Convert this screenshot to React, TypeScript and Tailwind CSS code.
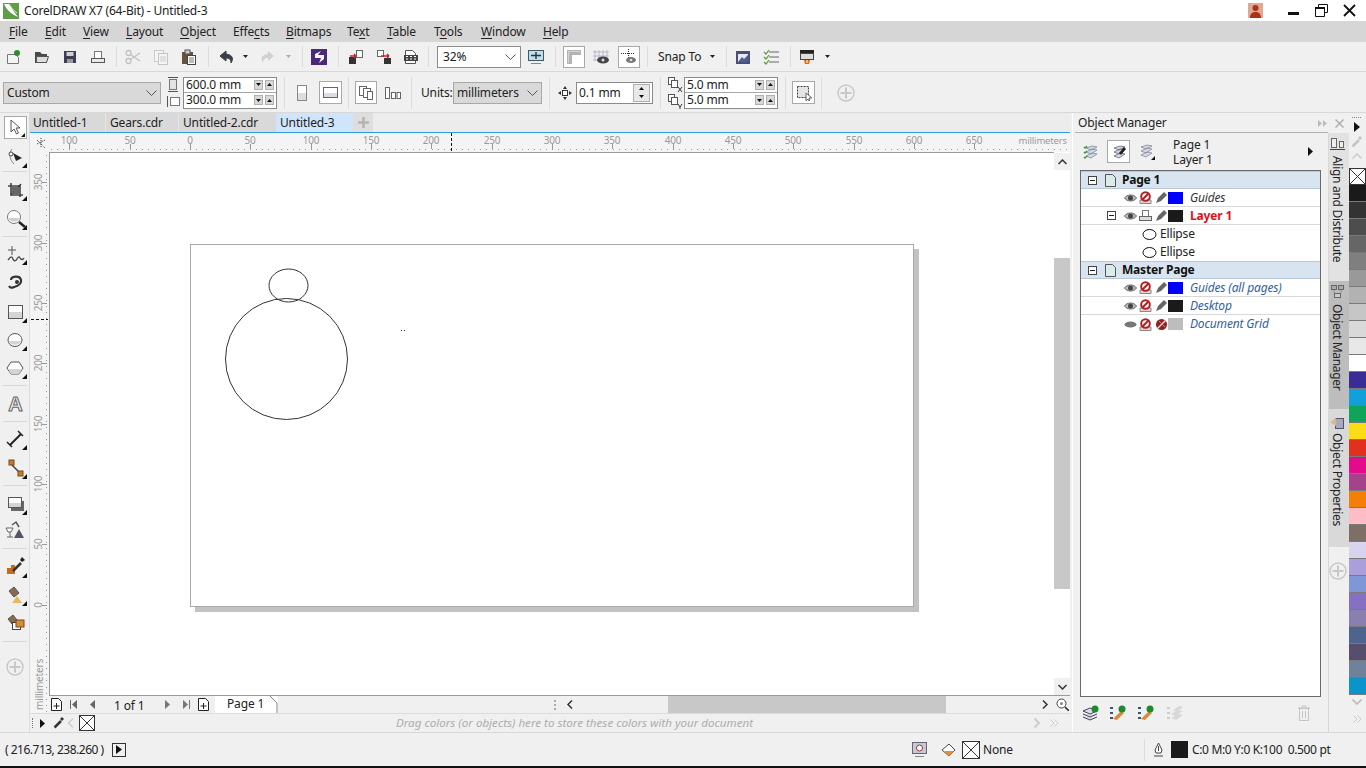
import React from 'react'

const FONT = "font-['Noto_Sans','Open_Sans',sans-serif]"

type IconProps = { className?: string; w?: number; h?: number; children?: React.ReactNode; box?: string }

const Ico = ({ className = '', w = 16, h = 16, box, children }: IconProps) => (
    <svg width={w} height={h} viewBox={box || `0 0 ${w} ${h}`} className={`block shrink-0 ${className}`}>
        {children}
    </svg>
)

const Sep = ({ className = '' }: { className?: string }) => <div className={`w-px bg-[#dcdcdc] shrink-0 ${className}`} />

const Caret = ({ className = '', color = '#222' }: { className?: string; color?: string }) => (
    <Ico w={5} h={3} className={className}>
        <path d="M0 0h5L2.500 3z" fill={color} />
    </Ico>
)

const Chevron = ({ color = '#555' }: { color?: string }) => (
    <Ico w={11} h={6}>
        <path d="M.5.5l5 5 5-5" fill="none" stroke={color} />
    </Ico>
)

/* small black corner mark on toolbox flyouts */
const Fly = () => <path d="M24 23h-5l5-5z" fill="#111" />

const ToolIcon = ({ y, children, fly = true }: { y: string; children: React.ReactNode; fly?: boolean }) => (
    <svg width={26} height={24} viewBox="0 0 26 24" className={`block shrink-0 ml-[3px] ${y}`}>
        {children}
        {fly && <Fly />}
    </svg>
)

const ToolSep = ({ y }: { y: string }) => <div className={`h-px w-[24px] ml-[3px] bg-[#d8d8d8] shrink-0 ${y}`} />

const Toolbox = () => (
    <div className="w-[30px] shrink-0 bg-[#f0f0f0] border-r border-[#dcdcdc] flex flex-col">
        <div className="ml-[4px] mt-[3px] h-[23px] w-[23px] bg-white border border-[#a8a8a8] shrink-0 relative">
            <svg width={21} height={21} viewBox="0 0 21 21" className="block">
                <path d="M6 3v12l3-3 2.500 5 2-1-2.500-5h4z" fill="#fff" stroke="#555" />
                <path d="M20 20h-4l4-4z" fill="#111" />
            </svg>
        </div>
        {/* shape */}
        <ToolIcon y="mt-[6px]">
            <path d="M9 4c-3 4-3 10 2 15" fill="none" stroke="#888" />
            <circle cx="8" cy="9" r="2" fill="#fff" stroke="#444" />
            <path d="M10 8l9 5-6 3z" fill="#222" />
        </ToolIcon>
        <ToolSep y="mt-[2px]" />
        {/* crop */}
        <ToolIcon y="mt-[6px]">
            <path d="M8 5v12h12M5 8h12v11" fill="none" stroke="#444" strokeWidth="1.600" />
            <path d="M8 17L18 6" stroke="#333" strokeWidth="1.300" />
            <rect x="9" y="9" width="7" height="7" fill="#666" />
        </ToolIcon>
        {/* zoom */}
        <ToolIcon y="mt-[5px]">
            <circle cx="11" cy="10" r="6.500" fill="#fff" stroke="#777" />
            <path d="M5.500 11h11a6 6 0 01-11 0z" fill="#ccc" />
            <path d="M16 15l6 5" stroke="#222" strokeWidth="2.500" />
        </ToolIcon>
        <ToolSep y="mt-[5px]" />
        {/* freehand */}
        <ToolIcon y="mt-[5px]">
            <path d="M9 4v9M5 8h8" stroke="#555" />
            <path d="M5 18c3-4 4-4 5-1s3 2 4 0 2-3 3-1 3 2 4 0" fill="none" stroke="#444" strokeWidth="1.300" />
        </ToolIcon>
        {/* smart drawing */}
        <ToolIcon y="mt-[5px]" fly={false}>
            <path d="M8 9c0-4 9-5 10 0s-4 6-7 7c-2 1-4 1-5-1" fill="none" stroke="#333" strokeWidth="2.200" />
            <circle cx="14" cy="11" r="2" fill="#333" />
        </ToolIcon>
        {/* rectangle */}
        <ToolIcon y="mt-[5px]">
            <rect x="5.500" y="5.500" width="14" height="13" fill="#fff" stroke="#555" />
            <rect x="6" y="12" width="13" height="6" fill="#d4d4d4" />
        </ToolIcon>
        {/* ellipse */}
        <ToolIcon y="mt-[4px]">
            <ellipse cx="12" cy="12" rx="7" ry="6.500" fill="#fff" stroke="#555" />
            <path d="M5.500 13h13a7 6 0 01-13 0z" fill="#d4d4d4" />
        </ToolIcon>
        {/* polygon */}
        <ToolIcon y="mt-[4px]">
            <path d="M8 6h8l4 6-4 6H8l-4-6z" fill="#fff" stroke="#555" />
            <path d="M5 13h14l-3 5H8z" fill="#d4d4d4" />
        </ToolIcon>
        <ToolSep y="mt-[5px]" />
        {/* text tool glyph */}
        <ToolIcon y="mt-[6px]" fly={false}>
            <text x="12.500" y="19" textAnchor="middle" fontFamily="Liberation Sans" fontSize="20" fontWeight="700" fill="#eee" stroke="#666" strokeWidth="1">
                A
            </text>
        </ToolIcon>
        <ToolSep y="mt-[5px]" />
        {/* dimension */}
        <ToolIcon y="mt-[5px]">
            <path d="M7 18L18 7" stroke="#222" strokeWidth="2" />
            <path d="M4 15l5 5M15 4l5 5" stroke="#222" strokeWidth="1.500" />
        </ToolIcon>
        {/* connector */}
        <ToolIcon y="mt-[5px]">
            <path d="M8 8l9 9" stroke="#444" strokeWidth="1.500" />
            <rect x="6" y="4" width="5" height="5" fill="#c8792e" stroke="#7a4a1a" />
            <rect x="15" y="15" width="5" height="5" fill="#c8792e" stroke="#7a4a1a" />
        </ToolIcon>
        <ToolSep y="mt-[5px]" />
        {/* drop shadow */}
        <ToolIcon y="mt-[6px]">
            <rect x="8" y="9" width="13" height="10" fill="#666" />
            <rect x="5.500" y="5.500" width="13" height="10" fill="#fff" stroke="#555" />
            <rect x="6" y="11" width="12" height="4" fill="#d4d4d4" />
        </ToolIcon>
        {/* transparency */}
        <ToolIcon y="mt-[3px]" fly={false}>
            <path d="M3 9h7l-2 4H5zM7 13v5M4 18h6" fill="#fff" stroke="#666" />
            <path d="M9 6l4-3 3 5" fill="none" stroke="#555" strokeWidth="1.500" />
            <path d="M16 10l5 9H11z" fill="#556" />
        </ToolIcon>
        <ToolSep y="mt-[5px]" />
        {/* eyedropper */}
        <ToolIcon y="mt-[6px]">
            <path d="M4 13h4v-3h4v9H4z" fill="#c86a1e" />
            <path d="M10 16l8-8" stroke="#333" strokeWidth="2.500" />
            <path d="M17 5l2-3 3 3-3 2z" fill="#222" />
        </ToolIcon>
        {/* interactive fill */}
        <ToolIcon y="mt-[4px]">
            <path d="M6 8l5-4 5 6-5 4z" fill="#8a6a4a" stroke="#555" />
            <path d="M14 13l5 7H9z" fill="#e8b860" />
        </ToolIcon>
        {/* smart fill */}
        <ToolIcon y="mt-[4px]" fly={false}>
            <path d="M5 8l5-4 4 5-5 4z" fill="#8a6a4a" stroke="#555" />
            <rect x="9.500" y="11.500" width="8" height="7" fill="#fff" stroke="#444" />
            <rect x="13" y="9" width="8" height="7" fill="#d88a3c" stroke="#7a4a1a" />
        </ToolIcon>
        <ToolSep y="mt-[6px]" />
        <div className="ml-[6px] mt-[16px]">
            <PlusRound />
        </div>
    </div>
)

const PlusRound = () => (
    <Ico w={18} h={18}>
        <circle cx="9" cy="9" r="8" fill="none" stroke="#c8c8c8" strokeWidth="1.500" />
        <path d="M9 3.500v11M3.500 9h11" stroke="#c8c8c8" strokeWidth="2" />
    </Ico>
)

const TitleBar = () => (
    <div className="h-[21px] bg-white flex items-center shrink-0">
        <Ico w={16} h={16} className="ml-[3px]">
            <rect width="16" height="16" fill="#5f9e45" />
            <path d="M1 1c3 6 7 10 14 13C11 9 8 4 6 1z" fill="#fff" />
            <path d="M6 1c2 3 4 6 8 9" stroke="#cfe6bd" fill="none" />
        </Ico>
        <span className="ml-[5px] text-[12px] text-[#222] tracking-[-0.2px]">CorelDRAW X7 (64-Bit) - Untitled-3</span>
        <div className="ml-auto flex items-center">
            <Ico w={15} h={15}>
                <rect width="15" height="15" fill="#e2a78f" />
                <circle cx="7.500" cy="5" r="3" fill="#a8321a" />
                <path d="M2 15c0-5 3-6 5.500-6s5.500 1 5.500 6z" fill="#a8321a" />
            </Ico>
            <Ico w={11} h={3} className="ml-[25px] mt-[6px]">
                <rect width="11" height="3" fill="#111" />
            </Ico>
            <Ico w={13} h={13} className="ml-[16px]">
                <path d="M3.500 3V.5h9v8H10M.5 3.500h9v9h-9z" fill="none" stroke="#111" />
                <path d="M0 3h10v2H0z" fill="#111" />
            </Ico>
            <Ico w={13} h={13} className="ml-[15px] mr-[10px]">
                <path d="M1 1l11 11M12 1L1 12" stroke="#111" strokeWidth="1.800" />
            </Ico>
        </div>
    </div>
)

const menus = [
    { pre: '', key: 'F', post: 'ile', w: 'w-[36px]' },
    { pre: '', key: 'E', post: 'dit', w: 'w-[38px]' },
    { pre: '', key: 'V', post: 'iew', w: 'w-[43px]' },
    { pre: '', key: 'L', post: 'ayout', w: 'w-[54px]' },
    { pre: '', key: 'O', post: 'bject', w: 'w-[53px]' },
    { pre: 'Effe', key: 'c', post: 'ts', w: 'w-[53px]' },
    { pre: '', key: 'B', post: 'itmaps', w: 'w-[61px]' },
    { pre: 'Te', key: 'x', post: 't', w: 'w-[40px]' },
    { pre: '', key: 'T', post: 'able', w: 'w-[47px]' },
    { pre: 'T', key: 'o', post: 'ols', w: 'w-[47px]' },
    { pre: '', key: 'W', post: 'indow', w: 'w-[62px]' },
    { pre: '', key: 'H', post: 'elp', w: 'w-[40px]' },
]

const MenuBar = () => (
    <div className="h-[21px] bg-[#d6d6d6] flex items-center pl-[9px] shrink-0 text-[12px] text-[#222]">
        {menus.map((m) => (
            <span key={m.key + m.post} className={`${m.w} shrink-0`}>
                {m.pre}
                <span className="underline underline-offset-2">{m.key}</span>
                {m.post}
            </span>
        ))}
    </div>
)

const Toolbar = () => (
    <div className="h-[30px] bg-[#f0f0f0] border-b border-[#d8d8d8] flex items-center shrink-0 text-[12px] text-[#222]">
        <Ico className="ml-[5px]">
            <path d="M2.500 5.500h8l3 3v6h-11z" fill="#f4f4f4" stroke="#777" />
            <circle cx="12" cy="4" r="3" fill="#2e8b2e" />
        </Ico>
        <Ico className="ml-[13px]">
            <path d="M1 3h5l2 2h5v9H1z" fill="#4a4a4a" />
            <path d="M2.500 7.500h12l-2 6h-10z" fill="#ddd" stroke="#555" />
        </Ico>
        <Ico className="ml-[12px]">
            <rect x="2" y="2" width="12" height="12" fill="#3d3d55" />
            <rect x="4.500" y="3" width="7" height="4" fill="#d0d0d8" />
            <rect x="5" y="10" width="6" height="4" fill="#999" />
        </Ico>
        <Ico className="ml-[12px]">
            <rect x="4.500" y="2.500" width="7" height="7" fill="#fff" stroke="#777" />
            <rect x="1.500" y="9.500" width="13" height="4" fill="#e8e8e8" stroke="#555" />
        </Ico>
        <Sep className="ml-[10px] h-[21px]" />
        <Ico className="ml-[8px]">
            <circle cx="3.500" cy="4" r="2.500" fill="none" stroke="#c0c0c0" strokeWidth="1.300" />
            <circle cx="3.500" cy="12" r="2.500" fill="none" stroke="#c0c0c0" strokeWidth="1.300" />
            <path d="M5.500 5.500L15 12M5.500 10.500L15 4" stroke="#c0c0c0" strokeWidth="1.300" />
        </Ico>
        <Ico className="ml-[12px]">
            <rect x="1.500" y="1.500" width="9" height="11" fill="#f4f4f4" stroke="#ccc" />
            <rect x="5.500" y="4.500" width="9" height="11" fill="#f4f4f4" stroke="#c4c4c4" />
            <path d="M7 8h6M7 10h6M7 12h6" stroke="#ccc" />
        </Ico>
        <Ico className="ml-[12px]">
            <rect x="1" y="3" width="11" height="12" fill="#6a5238" />
            <rect x="4" y="1" width="5" height="4" fill="#ccc" stroke="#555" />
            <rect x="6.500" y="6.500" width="8" height="9" fill="#fff" stroke="#444" />
            <path d="M8 9h5M8 11h5M8 13h5" stroke="#777" />
        </Ico>
        <Sep className="ml-[11px] h-[21px]" />
        <Ico className="ml-[9px]">
            <path d="M8 2L2 7l6 5V9c3 0 5 1 5 5 2-3 3-8-5-9z" fill="#3a3f48" stroke="#3a3f48" />
        </Ico>
        <Caret className="ml-[9px]" />
        <Ico className="ml-[12px]">
            <path d="M8 2l6 5-6 5V9c-3 0-5 1-5 5-2-3-3-8 5-9z" fill="#d0d0d0" />
        </Ico>
        <Caret className="ml-[10px]" color="#aaa" />
        <Sep className="ml-[11px] h-[21px]" />
        <Ico className="ml-[8px]">
            <rect width="16" height="16" fill="#4a2a78" />
            <path d="M10 2L4 5v4h6l-2 5 5-4V6H7z" fill="#f2f2f2" />
        </Ico>
        <Sep className="ml-[11px] h-[21px]" />
        <Ico className="ml-[9px]">
            <rect x="1" y="8" width="7" height="7" fill="#333" />
            <rect x="8.500" y="1.500" width="6" height="7" fill="#fff" stroke="#666" />
            <path d="M2 7h6M8 7l-2-2M8 7L6 9" stroke="#c22" strokeWidth="1.400" fill="none" />
        </Ico>
        <Ico className="ml-[12px]">
            <rect x="1.500" y="1.500" width="6" height="6" fill="#fff" stroke="#666" />
            <rect x="8" y="9" width="7" height="6" fill="#333" />
            <path d="M5 7h8M13 7l-2-2M13 7l-2 2" stroke="#c22" strokeWidth="1.400" fill="none" />
        </Ico>
        <Ico className="ml-[11px]">
            <path d="M2.500 1.500h7l3 3v10h-10z" fill="#fff" stroke="#555" />
            <rect x="1" y="6" width="14" height="6" fill="#444" />
            <path d="M3 7.500h2M7 7.500h2M11 7.500h2M3 10h2M7 10h2M11 10h2" stroke="#fff" />
        </Ico>
        <Sep className="ml-[9px] h-[21px]" />
        <div className="ml-[8px] w-[84px] h-[22px] bg-white border border-[#8a8a8a] flex items-center justify-between pl-[5px] pr-[4px] shrink-0">
            <span>32%</span>
            <Chevron />
        </div>
        <Ico className="ml-[7px]">
            <rect x=".5" y="1.500" width="15" height="10" fill="#bfe0e8" stroke="#456" />
            <path d="M8 3v7M3 6.500h10" stroke="#234" strokeWidth="1.400" />
            <path d="M3 14.500h10" stroke="#888" />
        </Ico>
        <Sep className="ml-[11px] h-[21px]" />
        <div className="ml-[7px] w-[22px] h-[22px] bg-white border border-[#a8a8a8] flex items-center justify-center shrink-0">
            <Ico w={16} h={16}>
                <path d="M1 1h14v5H6v9H1z" fill="#b4b4b4" />
                <path d="M2 2h12v1H2zM2 3h1v11H2z" fill="#d4d4d4" />
            </Ico>
        </div>
        <Ico className="ml-[8px]">
            <path d="M2 1v11M6 1v11M10 1v11M14 1v11M0 3h16M0 7h16M0 11h8" stroke="#b8b8c8" />
            <ellipse cx="10" cy="11" rx="6" ry="3.500" fill="#444" />
            <circle cx="10" cy="11" r="1.500" fill="#ddd" />
        </Ico>
        <div className="ml-[9px] w-[22px] h-[22px] bg-white border border-[#a8a8a8] flex items-center justify-center shrink-0">
            <Ico w={16} h={16}>
                <path d="M7.500 0v11M0 4.500h14" stroke="#333" strokeDasharray="1 1" />
                <ellipse cx="10" cy="11" rx="5" ry="3" fill="#777" />
                <circle cx="10" cy="11" r="1.300" fill="#ddd" />
            </Ico>
        </div>
        <Sep className="ml-[7px] h-[21px]" />
        <span className="ml-[10px] w-[42px] shrink-0 whitespace-nowrap">Snap To</span>
        <Caret className="ml-[10px]" />
        <Sep className="ml-[11px] h-[21px]" />
        <Ico className="ml-[8px]">
            <rect x="1" y="2" width="14" height="13" fill="#4a4f78" />
            <path d="M3 5h10v8H3z" fill="#e8e8f0" />
            <path d="M3 13l4-5 2 2 4-4v7z" fill="#4a5f98" />
        </Ico>
        <Ico className="ml-[12px]">
            <path d="M6 3h10M6 8h10M6 13h10" stroke="#666" />
            <path d="M1 3l2 2 3-4M1 8l2 2 3-4M1 13l2 2 3-4" fill="none" stroke="#5a9a3a" strokeWidth="1.200" />
        </Ico>
        <Sep className="ml-[11px] h-[21px]" />
        <Ico className="ml-[8px]">
            <rect x="1" y="1" width="14" height="3" fill="#222" />
            <rect x="1.500" y="4.500" width="13" height="6" fill="#ddd" stroke="#444" />
            <path d="M5 11h6l-1 4H6z" fill="#e8622a" />
            <path d="M7 11h2v3H7z" fill="#f4c04a" />
        </Ico>
        <Caret className="ml-[10px]" />
    </div>
)

const Spin = ({ up }: { up: boolean }) => (
    <div className="w-[9px] h-[10px] bg-[#d8d8d8] border border-[#b0b0b0] flex items-center justify-center shrink-0">
        <Ico w={5} h={3}>
            <path d={up ? 'M2.500 0L5 3H0z' : 'M0 0h5L2.500 3z'} fill="#111" />
        </Ico>
    </div>
)

const DoubleInput = ({ values, className }: { values: string[]; className: string }) => (
    <div className={`w-[94px] h-[32px] bg-white border border-[#8a8a8a] flex flex-col shrink-0 ${className}`}>
        {values.map((v, i) => (
            <div key={i} className={`h-[15px] flex items-center pl-[2px] pr-[2px] gap-[2px] shrink-0 ${i === 0 ? 'border-b border-[#a8a8a8]' : ''}`}>
                <span className="mr-auto leading-[14px]">{v}</span>
                <Spin up={false} />
                <Spin up={true} />
            </div>
        ))}
    </div>
)

const PropertyBar = () => (
    <div className="h-[41px] bg-[#f0f0f0] border-b border-[#d8d8d8] flex items-center shrink-0 pt-[1px] text-[12px] text-[#222]">
        <div className="ml-[3px] w-[158px] h-[22px] bg-[#d9d9d9] border border-[#a8a8a8] flex items-center justify-between pl-[3px] pr-[3px] shrink-0">
            <span>Custom</span>
            <Chevron />
        </div>
        <div className="ml-[5px] w-[14px] h-[32px] flex flex-col justify-between shrink-0">
            <Ico w={14} h={15}>
                <path d="M2 .5h10M2 14.500h10" stroke="#555" />
                <rect x="3.500" y="2.500" width="7" height="10" fill="#e4e4e4" stroke="#777" />
            </Ico>
            <Ico w={14} h={15}>
                <path d="M1.500 2v11" stroke="#555" />
                <rect x="4.500" y="3.500" width="9" height="8" fill="#fff" stroke="#777" />
            </Ico>
        </div>
        <DoubleInput className="ml-[3px]" values={['600.0 mm', '300.0 mm']} />
        <Sep className="ml-[7px] h-[32px]" />
        <Ico w={14} h={18} className="ml-[10px]">
            <rect x="2.500" y="1.500" width="9" height="15" fill="#fff" stroke="#888" />
            <rect x="3" y="9" width="8" height="7" fill="#dcdce4" />
        </Ico>
        <div className="ml-[10px] w-[23px] h-[23px] bg-white border border-[#a8a8a8] flex items-center justify-center shrink-0">
            <Ico w={15} h={11}>
                <rect x=".5" y=".5" width="14" height="10" fill="#fff" stroke="#666" />
                <rect x="1" y="6" width="13" height="4" fill="#dcdce4" />
            </Ico>
        </div>
        <Sep className="ml-[6px] h-[32px]" />
        <div className="ml-[6px] w-[22px] h-[23px] bg-white border border-[#a8a8a8] flex items-center justify-center shrink-0">
            <Ico w={16} h={16}>
                <rect x="1.500" y="1.500" width="7" height="9" fill="#fff" stroke="#666" />
                <rect x="5.500" y="3.500" width="7" height="9" fill="#fff" stroke="#666" />
                <rect x="9.500" y="6.500" width="5" height="8" fill="#fff" stroke="#666" />
            </Ico>
        </div>
        <Ico w={16} h={12} className="ml-[8px]">
            <rect x=".5" y=".5" width="4" height="11" fill="#fff" stroke="#666" />
            <rect x="6.500" y="5.500" width="4" height="6" fill="#fff" stroke="#666" />
            <rect x="12" y="5.500" width="3.500" height="6" fill="#fff" stroke="#666" />
        </Ico>
        <Sep className="ml-[10px] h-[32px]" />
        <span className="ml-[9px] w-[32px] shrink-0">Units:</span>
        <div className="w-[89px] h-[22px] bg-[#d9d9d9] border border-[#a8a8a8] flex items-center justify-between pl-[3px] pr-[3px] shrink-0">
            <span>millimeters</span>
            <Chevron />
        </div>
        <Sep className="ml-[7px] h-[32px]" />
        <Ico w={14} h={14} className="ml-[8px]">
            <rect x="4.500" y="4.500" width="5" height="5" fill="#fff" stroke="#333" />
            <path d="M7 0l2 3H5zM7 14l2-3H5zM0 7l3-2v4zM14 7l-3-2v4z" fill="#333" />
        </Ico>
        <div className="ml-[4px] w-[77px] h-[22px] bg-white border border-[#8a8a8a] flex items-center pl-[2px] pr-[2px] shrink-0">
            <span className="mr-auto">0.1 mm</span>
            <div className="w-[17px] h-[18px] bg-[#e8e8e8] border border-[#b0b0b0] flex flex-col items-center justify-around">
                <Ico w={5} h={3}>
                    <path d="M2.500 0L5 3H0z" fill="#111" />
                </Ico>
                <Ico w={5} h={3}>
                    <path d="M0 0h5L2.500 3z" fill="#111" />
                </Ico>
            </div>
        </div>
        <Sep className="ml-[7px] h-[32px]" />
        <div className="ml-[7px] w-[15px] h-[32px] flex flex-col justify-between shrink-0 text-[#333]">
            <Ico w={15} h={15}>
                <rect x=".5" y=".5" width="6" height="7" fill="#fff" stroke="#555" />
                <rect x="3.500" y="3.500" width="6" height="7" fill="#fff" stroke="#555" />
                <path d="M10 10l4 5M14 10l-4 5" stroke="#333" />
            </Ico>
            <Ico w={15} h={15}>
                <rect x=".5" y=".5" width="6" height="7" fill="#fff" stroke="#555" />
                <rect x="3.500" y="3.500" width="6" height="7" fill="#fff" stroke="#555" />
                <path d="M10 10l2 3 2-3M12 13v2" stroke="#333" fill="none" />
            </Ico>
        </div>
        <DoubleInput className="ml-[1px]" values={['5.0 mm', '5.0 mm']} />
        <Sep className="ml-[7px] h-[32px]" />
        <div className="ml-[6px] w-[23px] h-[23px] bg-white border border-[#a8a8a8] flex items-center justify-center shrink-0">
            <Ico w={18} h={18}>
                <rect x="2.500" y="2.500" width="11" height="11" fill="#e4e4e4" stroke="#444" strokeDasharray="2 1" />
                <path d="M11 9v8l2-2 1 2 1-1-1-2h3z" fill="#fff" stroke="#666" />
            </Ico>
        </div>
        <Sep className="ml-[6px] h-[32px]" />
        <div className="ml-[15px]">
            <PlusRound />
        </div>
    </div>
)

const Tabs = () => (
    <div className="h-[20px] bg-[#ececec] border-b border-[#2ea0d8] flex shrink-0 text-[12px] text-[#222]">
        <div className="w-[76px] bg-[#d9d9d9] pl-[3px] leading-[19px] border-r border-[#e6e6e6]">Untitled-1</div>
        <div className="w-[73px] bg-[#d9d9d9] pl-[4px] leading-[19px] border-r border-[#e6e6e6]">Gears.cdr</div>
        <div className="w-[97px] bg-[#d9d9d9] pl-[4px] leading-[19px]">Untitled-2.cdr</div>
        <div className="w-[77px] bg-[#cfe5fb] pl-[4px] leading-[19px]">Untitled-3</div>
        <div className="w-[20px] bg-[#dedede] flex items-center justify-center">
            <Ico w={11} h={11}>
                <path d="M5.500 0v11M0 5.500h11" stroke="#b4b4b4" strokeWidth="2.500" />
            </Ico>
        </div>
    </div>
)

const hLabels = [
    [69, '100'], [130, '50'], [190, '0'], [250, '50'], [311, '100'], [371, '150'], [431, '200'], [492, '250'],
    [552, '300'], [612, '350'], [673, '400'], [733, '450'], [793, '500'], [854, '550'], [914, '600'], [974, '650'],
] as [number, string][]

const HRuler = () => (
    <svg width={1040} height={19} viewBox="30 133 1040 19" className="block shrink-0 bg-[#f4f4f4]">
        {Array.from({ length: 172 }, (_, i) => (
            <rect key={i} x={Math.round(51 + i * 6.04)} y={149} width={1} height={1} fill="#999" />
        ))}
        {hLabels.map(([x, t]) => (
            <g key={x + t}>
                <rect x={x} y={144} width={1} height={5} fill="#999" />
                <text x={x} y={144} textAnchor="middle" fontSize="10" fontFamily="Noto Sans" fill="#9a9a9a">
                    {t}
                </text>
            </g>
        ))}
        <text x={1067} y={144} textAnchor="end" fontSize="9.500" fontFamily="Noto Sans" fill="#9a9a9a">
            millimeters
        </text>
        <path d="M451.500 133v18" stroke="#111" strokeDasharray="3 2" />
        <path d="M37 140l8 8M37 144l8-4M41 138v9" stroke="#333" strokeDasharray="1 1" />
    </svg>
)

const vLabels = [
    [182, '350'], [243, '300'], [303, '250'], [363, '200'], [424, '150'], [484, '100'], [544, '50'], [605, '0'],
] as [number, string][]

const VRuler = () => (
    <svg width={19} height={561} viewBox="30 152 19 561" className="block shrink-0 bg-[#f4f4f4]">
        {Array.from({ length: 94 }, (_, i) => (
            <rect key={i} x={46} y={Math.round(155 + i * 6.04)} width={1} height={1} fill="#999" />
        ))}
        {vLabels.map(([y, t]) => (
            <g key={t}>
                <rect x={42} y={y} width={5} height={1} fill="#999" />
                <text transform={`translate(42 ${y}) rotate(-90)`} textAnchor="middle" fontSize="10" fontFamily="Noto Sans" fill="#9a9a9a">
                    {t}
                </text>
            </g>
        ))}
        <text transform="translate(43 710) rotate(-90)" fontSize="10" fontFamily="Noto Sans" fill="#9a9a9a">
            millimeters
        </text>
        <path d="M31 319.500h17" stroke="#111" strokeDasharray="3 2" />
    </svg>
)

const Canvas = () => (
    <div className="flex-1 flex min-h-0">
        <div className="flex-1 bg-white relative border-l border-t border-[#9a9a9a]">
            <div className="absolute left-[140px] top-[91px] w-[724px] h-[363px] bg-white border border-[#a8a8a8] shadow-[5px_5px_0_#c2c2c2]">
                <svg width={722} height={361} className="block">
                    <ellipse cx="95.500" cy="114" rx="61" ry="60.500" fill="none" stroke="#333" />
                    <ellipse cx="97.500" cy="40.500" rx="19.500" ry="16.500" fill="none" stroke="#333" />
                    <rect x="210" y="85" width="1" height="1" fill="#222" />
                    <rect x="213" y="85" width="1" height="1" fill="#222" />
                </svg>
            </div>
        </div>
        <div className="w-[16px] bg-white flex flex-col items-center shrink-0">
            <div className="h-[17px] w-full bg-[#f0f0f0] mt-[1px] flex items-center justify-center">
                <Ico w={9} h={6}>
                    <path d="M.5 5l4-4 4 4" fill="none" stroke="#333" strokeWidth="1.500" />
                </Ico>
            </div>
            <div className="mt-[88px] h-[331px] w-full bg-[#c8c8c8]" />
            <div className="mt-auto h-[17px] w-full bg-[#f0f0f0] flex items-center justify-center">
                <Ico w={9} h={6}>
                    <path d="M.5 1l4 4 4-4" fill="none" stroke="#333" strokeWidth="1.500" />
                </Ico>
            </div>
        </div>
    </div>
)

const PageAdd = ({ className }: { className: string }) => (
    <Ico w={11} h={13} className={className}>
        <path d="M.5.5h7l3 3v9H.5z" fill="#fff" stroke="#222" />
        <path d="M5.500 5v6M2.500 8h6" stroke="#222" />
    </Ico>
)

const NavBar = () => (
    <div className="h-[18px] bg-[#f0f0f0] border-t border-[#9a9a9a] flex items-center shrink-0 text-[12px] text-[#222]">
        <PageAdd className="ml-[2px]" />
        <Ico w={7} h={9} className="ml-[8px]">
            <path d="M.5 0v9" stroke="#666" />
            <path d="M7 0v9L2 4.500z" fill="#666" />
        </Ico>
        <Ico w={6} h={9} className="ml-[12px]">
            <path d="M6 0v9L1 4.500z" fill="#666" />
        </Ico>
        <span className="ml-[19px] w-[34px] shrink-0 whitespace-nowrap mt-[2px]">1 of 1</span>
        <Ico w={6} h={9} className="ml-[17px]">
            <path d="M0 0v9l5-4.500z" fill="#777" />
        </Ico>
        <Ico w={7} h={9} className="ml-[12px]">
            <path d="M0 0v9l5-4.500z" fill="#777" />
            <path d="M6.500 0v9" stroke="#777" />
        </Ico>
        <PageAdd className="ml-[8px]" />
        <div className="ml-[6px] w-[63px] h-[17px] bg-white relative pl-[12px] leading-[15px] shrink-0">
            Page 1
            <svg width={8} height={17} className="absolute right-0 top-0">
                <path d="M0 0l7 7v10" fill="none" stroke="#888" />
            </svg>
        </div>
        <div className="ml-[276px] w-[2px] h-[10px] border-l-2 border-dotted border-[#aaa] shrink-0" />
        <Ico w={7} h={9} className="ml-[10px]">
            <path d="M6 .5l-4 4 4 4" fill="none" stroke="#333" strokeWidth="1.500" />
        </Ico>
        <div className="ml-[95px] w-[278px] h-[17px] bg-[#c8c8c8] shrink-0" />
        <Ico w={7} h={9} className="ml-[96px]">
            <path d="M1 .5l4 4-4 4" fill="none" stroke="#333" strokeWidth="1.500" />
        </Ico>
        <Ico w={13} h={13} className="ml-[7px]">
            <circle cx="5.500" cy="5.500" r="4.500" fill="#fff" stroke="#444" />
            <circle cx="5.500" cy="5.500" r="1.500" fill="#888" />
            <path d="M9 9l4 4" stroke="#333" strokeWidth="1.600" />
        </Ico>
    </div>
)

const NoneSwatch = ({ className = '', w = 16, h = 16 }: { className?: string; w?: number; h?: number }) => (
    <Ico w={w} h={h} className={className}>
        <rect x=".5" y=".5" width={w - 1} height={h - 1} fill="#fff" stroke="#333" />
        <path d={`M0 0L${w} ${h}M${w} 0L0 ${h}`} stroke="#333" />
    </Ico>
)

const Dropper = ({ color = '#333' }: { color?: string }) => (
    <Ico w={11} h={12}>
        <path d="M1.500 10.500L8 4" stroke={color} strokeWidth="2.500" />
        <path d="M7 2l2-2 2 2-2 2z" fill={color} />
    </Ico>
)

const DotsV = ({ className = '' }: { className?: string }) => (
    <div className={`w-[1px] h-[10px] border-l border-dotted border-[#777] shrink-0 ${className}`} />
)

const ColorBar = () => (
    <div className="h-[19px] bg-[#f0f0f0] border-t border-[#dcdcdc] flex items-center shrink-0 text-[11.600px] italic tracking-normal text-[#adadad]">
        <DotsV className="ml-[2px]" />
        <Ico w={5} h={9} className="ml-[7px]">
            <path d="M0 0v9l5-4.500z" fill="#111" />
        </Ico>
        <div className="ml-[8px]">
            <Dropper />
        </div>
        <Ico w={7} h={10} className="ml-[3px]">
            <path d="M6 .5L1.500 5 6 9.500" fill="none" stroke="#ccc" strokeWidth="1.400" />
        </Ico>
        <NoneSwatch className="ml-[5px]" w={16} h={16} />
        <span className="ml-[301px] w-[356px] shrink-0 whitespace-nowrap">Drag colors (or objects) here to store these colors with your document</span>
        <Ico w={8} h={10} className="ml-[281px]">
            <path d="M1.500 .5L6 5 1.500 9.500" fill="none" stroke="#ccc" strokeWidth="2" />
        </Ico>
        <Ico w={9} h={8} className="ml-[9px]">
            <path d="M.5.5L4 4 .5 7.500M4.500.5L8 4 4.500 7.500" fill="none" stroke="#ccc" />
        </Ico>
    </div>
)

const Eye = ({ closed }: { closed?: boolean }) => (
    <Ico w={13} h={10} className="ml-[1px]">
        {closed ? (
            <ellipse cx="6.500" cy="5.500" rx="6" ry="3" fill="#777" />
        ) : (
            <>
                <path d="M.5 5C3 1 10 1 12.500 5 10 9 3 9 .5 5z" fill="#bbb" stroke="#666" />
                <circle cx="6.500" cy="5" r="2.500" fill="#444" />
            </>
        )}
    </Ico>
)

const NoPrint = () => (
    <Ico w={13} h={13} className="ml-[2px]">
        <path d="M1 9h11v3.500H1z" fill="#e8d0d0" stroke="#888" />
        <circle cx="6.500" cy="5.500" r="4.300" fill="#fff" stroke="#b02020" strokeWidth="2" />
        <path d="M3.500 8.500l6-6" stroke="#b02020" strokeWidth="2" />
    </Ico>
)

const Printer = () => (
    <Ico w={13} h={13} className="ml-[2px]">
        <rect x="3.500" y="1.500" width="6" height="6" fill="#fff" stroke="#777" />
        <rect x=".5" y="7.500" width="12" height="4" fill="#ddd" stroke="#666" />
    </Ico>
)

const Pencil = () => (
    <Ico w={13} h={13} className="ml-[3px]">
        <path d="M1 12l2-5 6-6 3 3-6 6z" fill="#666" />
    </Ico>
)

const PencilOff = () => (
    <Ico w={13} h={13} className="ml-[3px]">
        <circle cx="6.500" cy="6.500" r="5.500" fill="#8f2020" />
        <path d="M2.500 10.500l8-8" stroke="#ddd" strokeWidth="1.400" />
        <path d="M4 3l6 6" stroke="#c88" />
    </Ico>
)

const Toggle = ({ className }: { className: string }) => (
    <Ico w={9} h={9} className={className}>
        <rect x=".5" y=".5" width="8" height="8" fill="#fff" stroke="#444" />
        <path d="M2 4.500h5" stroke="#222" />
    </Ico>
)

const DocIcon = () => (
    <Ico w={11} h={13} className="ml-[8px]">
        <path d="M.5.5h7l3 3v9H.5z" fill="#d8ecea" stroke="#555" />
    </Ico>
)

const PageRow = ({ label }: { label: string }) => (
    <div className="h-[18px] bg-[#d8e5f0] border-y border-[#b8c8d8] flex items-center text-[12px] font-bold text-[#111]">
        <Toggle className="ml-[7px]" />
        <DocIcon />
        <span className="ml-[6px] tracking-[-0.2px]">{label}</span>
    </div>
)

const LayerRow = ({ label, swatch, text, toggle, print }: { label: string; swatch: string; text: string; toggle?: boolean; print?: boolean }) => (
    <div className={`h-[18px] border-b border-[#d8d8d8] flex items-center text-[12px] ${text}`}>
        {toggle ? <Toggle className="ml-[26px] mr-[7px]" /> : <div className="w-[42px] shrink-0" />}
        <Eye />
        {print ? <Printer /> : <NoPrint />}
        <Pencil />
        <div className={`w-[15px] h-[12px] shrink-0 ${swatch}`} />
        <span className="ml-[7px]">{label}</span>
    </div>
)

const EllipseRow = () => (
    <div className="h-[18px] flex items-center text-[12px] text-[#222]">
        <Ico w={15} h={11} className="ml-[61px]">
            <ellipse cx="7.500" cy="5.500" rx="6.500" ry="5" fill="#fff" stroke="#111" />
        </Ico>
        <span className="ml-[3px]">Ellipse</span>
    </div>
)

const LayerStack = ({ color }: { color: string }) => (
    <>
        <path d="M3 4l6-2 5 1-6 3zM3 8l6-3 5 1-6 4zM3 12l6-3 5 1-6 4z" fill="#d4d8e4" stroke={color} strokeWidth=".8" />
    </>
)

const DockerHeader = () => (
    <div className="h-[20px] flex items-center shrink-0 relative text-[12px] text-[#222]">
        <span className="ml-[3px]">Object Manager</span>
        <Ico w={9} h={7} className="ml-auto">
            <path d="M0 0v7l4-3.500zM5 0v7l4-3.500z" fill="#bbb" />
        </Ico>
        <Ico w={9} h={9} className="ml-[8px] mr-[5px]">
            <path d="M.5.5l8 8M8.500.5l-8 8" stroke="#aaa" strokeWidth="1.400" />
        </Ico>
        <div className="absolute left-0 bottom-0 w-[253px] h-px bg-[#b0b0b0]" />
    </div>
)

const Docker = () => (
    <div className="w-[253px] shrink-0 bg-[#f0f0f0] flex flex-col text-[12px] text-[#222]">
        <div className="h-[37px] flex items-center shrink-0">
            <Ico className="ml-[8px]">
                <LayerStack color="#7a8a9a" />
                <path d="M1 3l1 1 2-2M1 8l1 1 2-2M1 13l1 1 2-2" fill="none" stroke="#3f9a3f" strokeWidth="1.400" />
            </Ico>
            <div className="ml-[8px] w-[23px] h-[23px] bg-white border border-[#a8a8a8] flex items-center justify-center shrink-0">
                <Ico>
                    <LayerStack color="#667" />
                    <path d="M8 9l5-6 2 2-5 6z" fill="#222" />
                </Ico>
            </div>
            <svg width={18} height={18} viewBox="0 0 18 18" className="block shrink-0 ml-[8px]">
                <LayerStack color="#889" />
                <path d="M17 17h-4l4-4z" fill="#111" />
            </svg>
            <div className="ml-[17px] leading-[15px]">
                <div>Page 1</div>
                <div>Layer 1</div>
            </div>
            <Ico w={5} h={9} className="ml-auto mr-[15px]">
                <path d="M0 0v9l5-4.500z" fill="#111" />
            </Ico>
        </div>
        <div className="h-[527px] ml-[5px] w-[241px] bg-white border border-[#6a6a6a] shrink-0 flex flex-col">
            <PageRow label="Page 1" />
            <LayerRow label="Guides" swatch="bg-[#0000ff]" text="italic text-[#333]" />
            <LayerRow label="Layer 1" swatch="bg-[#1a1a1a]" text="font-bold text-[#e01020]" toggle print />
            <EllipseRow />
            <EllipseRow />
            <PageRow label="Master Page" />
            <LayerRow label="Guides (all pages)" swatch="bg-[#0000ff]" text="italic text-[#2f5fa0]" />
            <LayerRow label="Desktop" swatch="bg-[#1a1a1a]" text="italic text-[#2f5fa0]" />
            <div className="h-[18px] flex items-center text-[12px] italic text-[#2f5fa0]">
                <div className="w-[42px] shrink-0" />
                <Eye closed />
                <NoPrint />
                <PencilOff />
                <div className="w-[15px] h-[12px] bg-[#bdbdbd] shrink-0" />
                <span className="ml-[7px]">Document Grid</span>
            </div>
        </div>
        <div className="flex-1 flex items-center pb-[3px]">
            <Ico w={18} h={16} className="ml-[7px]">
                <path d="M1 6l7-3 7 3-7 3zM1 9l7 3 7-3M1 12l7 3 7-3" fill="#dde" stroke="#445" />
                <circle cx="13" cy="4" r="3.500" fill="#1e8a2e" />
            </Ico>
            <Ico w={18} h={16} className="ml-[9px]">
                <path d="M4 14l8-8 3 2-7 7z" fill="#d88a3c" />
                <path d="M1 3h3M1 8h3M1 13h3" stroke="#357" strokeWidth="2" />
                <circle cx="13" cy="4" r="3.500" fill="#1e8a2e" />
            </Ico>
            <Ico w={18} h={16} className="ml-[10px]">
                <path d="M4 14l8-8 3 2-7 7z" fill="#d88a3c" />
                <path d="M1 3h3M1 8h3M1 13h3" stroke="#357" strokeWidth="2" />
                <circle cx="13" cy="4" r="3.500" fill="#1e8a2e" />
            </Ico>
            <Ico w={18} h={16} className="ml-[11px]">
                <path d="M5 13l7-4 5 1-7 5zM5 9l7-4 5 1-7 5zM7 5l6-4 4 1-6 5z" fill="#d8d8d8" />
                <path d="M1 3h3M1 8h3M1 13h3" stroke="#ccc" strokeWidth="2" />
            </Ico>
            <Ico w={14} h={16} className="ml-[113px]">
                <path d="M1 3h12M5 3V1h4v2" fill="none" stroke="#c4c4c4" />
                <rect x="2.500" y="3.500" width="9" height="12" fill="none" stroke="#c4c4c4" />
                <path d="M5.500 6v7M8.500 6v7" stroke="#c4c4c4" />
            </Ico>
        </div>
    </div>
)

const SideTab = ({ label, bg, h, pt, gap, icon }: { label: string; bg: string; h: string; pt: string; gap: string; icon: React.ReactNode }) => (
    <div className={`${h} ${bg} ${pt} flex flex-col items-center pr-[4px] shrink-0`}>
        {icon}
        <span className={`${gap} [writing-mode:vertical-rl] text-[12px] tracking-[-0.3px] text-[#222] whitespace-nowrap`}>{label}</span>
    </div>
)

const SideTabs = () => (
    <div className="w-[21px] shrink-0 bg-[#f0f0f0] border-l border-[#d8d8d8] flex flex-col">
        <SideTab
            label="Align and Distribute"
            bg="bg-[#e2e2e2]"
            h="h-[148px]"
            pt="pt-[3px]"
            gap="mt-[5px]"
            icon={
                <Ico w={15} h={15}>
                    <rect x="1.500" y="2.500" width="5" height="9" fill="#eee" stroke="#666" />
                    <rect x="9.500" y="5.500" width="4" height="6" fill="#eee" stroke="#666" />
                    <path d="M0 13.500h15" stroke="#444" />
                </Ico>
            }
        />
        <SideTab
            label="Object Manager"
            bg="bg-[#bdbdbd]"
            h="h-[128px]"
            pt="pt-[3px]"
            gap="mt-[5px]"
            icon={
                <Ico w={15} h={15}>
                    <rect x="1.500" y="1.500" width="5" height="4" fill="#aaa" stroke="#666" />
                    <rect x="8.500" y="1.500" width="5" height="4" fill="#aaa" stroke="#666" />
                    <rect x="4.500" y="9.500" width="6" height="4" fill="#ccc" stroke="#666" />
                    <path d="M4 5.500v4M11 5.500v4" stroke="#666" strokeDasharray="1 1" />
                </Ico>
            }
        />
        <SideTab
            label="Object Properties"
            bg="bg-[#d9d9d9]"
            h="h-[138px]"
            pt="pt-[7px]"
            gap="mt-[2px]"
            icon={
                <Ico w={15} h={15}>
                    <rect x="5.500" y="2.500" width="8" height="10" fill="#a8a8c0" stroke="#556" />
                    <path d="M0 6l6-4v8z" fill="#d8b890" />
                </Ico>
            }
        />
        <div className="mt-[15px]">
            <PlusRound />
        </div>
    </div>
)

const swatches = [
    '#1a1a1a', '#333333', '#4d4d4d', '#666666', '#7f7f7f', '#999999', '#b2b2b2', '#c6c6c6', '#d9d9d9', '#e8e8e8',
    '#ffffff', '#3a2c96', '#11a0d8', '#0ea55a', '#fcdc14', '#e2301e', '#e40a8c', '#a6418c', '#f47f06', '#fdbcc6',
    '#7d6e66', '#d8d4f0', '#ab9fdb', '#7f97d6', '#8670c4', '#8a80b0', '#4e648c', '#564e6c', '#6e829c', '#0b93cc',
]

const Palette = () => (
    <div className="w-[17px] shrink-0 bg-[#f0f0f0] flex flex-col">
        <div className="h-[55px] flex flex-col items-center pr-[2px] shrink-0">
            <div className="mt-[4px] w-[9px] border-t border-dotted border-[#888]" />
            <Ico w={6} h={10} className="mt-[4px]">
                <path d="M0 0v10l6-5z" fill="#111" />
            </Ico>
            <div className="mt-[4px]">
                <Dropper color="#c4c4c4" />
            </div>
            <Ico w={10} h={6} className="mt-[5px]">
                <path d="M.5 5.500L5 1l4.500 4.500" fill="none" stroke="#ccc" strokeWidth="1.500" />
            </Ico>
        </div>
        <NoneSwatch w={17} h={17} />
        {swatches.map((c, i) => (
            <div key={i} className="h-[17px] w-[17px] border-b border-[#7a7a7a] shrink-0" style={{ backgroundColor: c }} />
        ))}
        <Ico w={10} h={6} className="mt-[4px] ml-[3px]">
            <path d="M.5.5L5 5 9.500.5" fill="none" stroke="#bbb" strokeWidth="1.600" />
        </Ico>
        <Ico w={9} h={8} className="mt-[10px] ml-[4px]">
            <path d="M.5.5L4 4 .5 7.500M4.500.5L8 4 4.500 7.500" fill="none" stroke="#ccc" />
        </Ico>
    </div>
)

const StatusBar = () => (
    <div className="h-[34px] bg-[#f0f0f0] border-t border-[#d8d8d8] flex items-center shrink-0 text-[12px] text-[#222]">
        <span className="ml-[5px] w-[100px] shrink-0 whitespace-nowrap tracking-[-0.5px]">( 216.713, 238.260 )</span>
        <div className="ml-[7px] w-[14px] h-[14px] border border-[#333] flex items-center justify-center shrink-0">
            <Ico w={6} h={9}>
                <path d="M0 0v9l6-4.500z" fill="#111" />
            </Ico>
        </div>
        <Ico w={15} h={16} className="ml-[786px]">
            <rect x=".5" y=".5" width="14" height="11" fill="#c8c8d0" stroke="#667" />
            <circle cx="7.500" cy="6" r="3" fill="#fff" stroke="#a03030" />
            <path d="M3 14.500h9" stroke="#888" />
        </Ico>
        <Ico w={16} h={15} className="ml-[14px]">
            <path d="M1 8l7-6 6 6-6 6z" fill="#fff" stroke="#444" />
            <path d="M3 9h10l-5 5z" fill="#e89030" />
        </Ico>
        <NoneSwatch className="ml-[5px]" w={18} h={18} />
        <span className="ml-[3px] w-[30px] shrink-0">None</span>
        <Sep className="ml-[131px] h-[22px]" />
        <Ico w={11} h={15} className="ml-[8px]">
            <path d="M5.500 1L9 8l-1 3H3L2 8z" fill="#fff" stroke="#444" />
            <path d="M5.500 4v5M1 14h9" stroke="#444" />
        </Ico>
        <div className="ml-[7px] w-[17px] h-[17px] bg-[#1a1a1a] shrink-0" />
        <span className="ml-[4px] whitespace-nowrap tracking-[-0.35px]">C:0 M:0 Y:0 K:100&nbsp; 0.500 pt</span>
    </div>
)

const App = () => (
    <div className={`${FONT} w-[1366px] h-[768px] overflow-hidden flex flex-col bg-[#f0f0f0] tracking-[-0.15px]`}>
        <TitleBar />
        <MenuBar />
        <Toolbar />
        <PropertyBar />
        <div className="flex-1 flex min-h-0">
            <Toolbox />
            <div className="w-[1040px] shrink-0 flex flex-col">
                <Tabs />
                <HRuler />
                <div className="flex-1 flex min-h-0">
                    <VRuler />
                    <div className="flex-1 flex flex-col min-w-0">
                        <Canvas />
                        <NavBar />
                    </div>
                </div>
                <ColorBar />
            </div>
            <div className="w-[5px] shrink-0">
                <div className="ml-[2px] w-px h-full bg-white" />
            </div>
            <div className="w-[274px] shrink-0 flex flex-col min-h-0">
                <DockerHeader />
                <div className="flex-1 flex min-h-0">
                    <Docker />
                    <SideTabs />
                </div>
            </div>
            <Palette />
        </div>
        <StatusBar />
        <div className="h-[2px] bg-[#111] shrink-0" />
    </div>
)

export default App
